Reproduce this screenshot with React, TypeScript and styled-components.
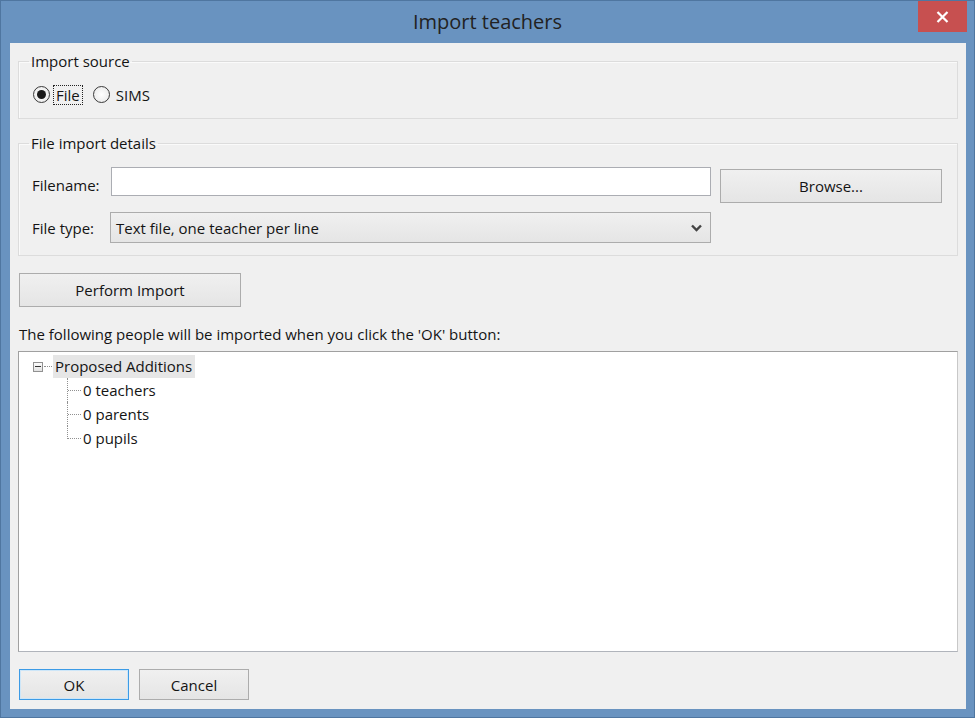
import * as React from 'react';
import styled, { createGlobalStyle } from 'styled-components';

const GlobalStyle = createGlobalStyle`
  html, body {
    margin: 0;
    padding: 0;
    background: #fff;
  }
  body {
    font-family: 'Open Sans', 'Noto Sans', 'DejaVu Sans', sans-serif;
    font-size: 15px;
    color: #141414;
  }
`;

const Window = styled.div`
  width: 975px;
  height: 718px;
  box-sizing: border-box;
  background: #6993c0;
  border: 1px solid #4f76a0;
  display: flex;
  flex-direction: column;
  padding: 0 8px 8px 8px;
`;

const TitleBar = styled.div`
  height: 42px;
  display: flex;
  align-items: center;
  justify-content: center;
  position: relative;
  flex: none;
`;

const Title = styled.div`
  font-size: 20px;
  color: #222;
  margin-top: -1px;
`;

const CloseButton = styled.div`
  position: absolute;
  right: -1px;
  top: 0;
  width: 49px;
  height: 31px;
  background: #c75050;
  display: flex;
  align-items: center;
  justify-content: center;
`;

const Client = styled.div`
  flex: 1;
  background: #f0f0f0;
  margin-left: 1px;
  padding: 9px 8px 0 8px;
  display: flex;
  flex-direction: column;
`;

const GroupBox = styled.fieldset<{ $gap?: number }>`
  margin: ${(p) => p.$gap ?? 0}px 0 0 0;
  padding: 0 0 0 11px;
  border: 1px solid #dcdcdc;
  box-shadow: inset 1px 1px 0 #fafafa;
  min-width: 0;
`;

const Legend = styled.legend`
  padding: 0 2px;
  margin-left: -1px;
  line-height: 19px;
`;

const RadioRow = styled.div`
  display: flex;
  align-items: center;
  height: 47px;
  padding-left: 3px;
`;

const RadioOption = styled.label`
  display: flex;
  align-items: center;
  margin-right: 11px;
`;

const RadioCircle = styled.span<{ $checked?: boolean }>`
  width: 17px;
  height: 17px;
  box-sizing: border-box;
  border-radius: 50%;
  border: 1px solid #3a3a3a;
  background: radial-gradient(circle, #fff 0%, #e6e6e6 100%);
  display: flex;
  align-items: center;
  justify-content: center;
  margin-right: 4px;

  &::after {
    content: '';
    display: ${(p) => (p.$checked ? 'block' : 'none')};
    width: 9px;
    height: 9px;
    border-radius: 50%;
    background: #1a1a1a;
  }
`;

const RadioText = styled.span<{ $focused?: boolean }>`
  padding: 0 2px;
  outline: ${(p) => (p.$focused ? '1px dotted #222' : 'none')};
  line-height: 18px;
`;

const FormGrid = styled.div`
  display: grid;
  grid-template-columns: 78px 601px 1fr;
  grid-template-rows: 36px 31px;
  row-gap: 9px;
  align-items: start;
  padding: 14px 16px 12px 2px;
`;

const FieldLabel = styled.span`
  align-self: center;
`;

const TextInput = styled.div`
  height: 29px;
  box-sizing: border-box;
  background: #fff;
  border: 1px solid #abadb3;
  margin-left: 1px;
`;

const BrowseButton = styled.div`
  margin-left: 9px;
  margin-top: 2px;
`;

const Select = styled.div`
  height: 31px;
  box-sizing: border-box;
  border: 1px solid #acacac;
  background: linear-gradient(#f0f0f0, #e5e5e5);
  display: flex;
  align-items: center;
  justify-content: space-between;
  padding: 0 8px 0 5px;
`;

const Button = styled.div<{ $width: number; $height?: number; $default?: boolean }>`
  width: ${(p) => p.$width}px;
  height: ${(p) => p.$height ?? 31}px;
  box-sizing: border-box;
  border: 1px solid ${(p) => (p.$default ? '#3c9be6' : '#acacac')};
  box-shadow: ${(p) => (p.$default ? 'inset 0 0 0 1px #cde6f8' : 'none')};
  background: linear-gradient(#f0f0f0, #e5e5e5);
  display: flex;
  align-items: center;
  justify-content: center;
  flex: none;
`;

const ActionRow = styled.div`
  margin-top: 17px;
  margin-left: 1px;
`;

const Caption = styled.div`
  margin-top: 18px;
  margin-left: 1px;
  line-height: 19px;
`;

const TreeBox = styled.div`
  margin-top: 7px;
  height: 301px;
  box-sizing: border-box;
  background: #fff;
  border: 1px solid #a0a0a0;
  border-right-color: #c8c8c8;
  border-bottom-color: #b0b4bb;
  padding: 3px 0 0 14px;
`;

const TreeRoot = styled.div`
  display: flex;
  align-items: center;
  height: 23px;
`;

const Expander = styled.span`
  width: 10px;
  height: 10px;
  box-sizing: border-box;
  border: 1px solid #919191;
  background: linear-gradient(#fcfcfc, #e2e2e2);
  display: flex;
  align-items: center;
  justify-content: center;

  &::after {
    content: '';
    width: 6px;
    height: 1px;
    background: #333;
  }
`;

const HLine = styled.span<{ $width: number }>`
  width: ${(p) => p.$width}px;
  border-top: 1px dotted #909090;
  align-self: center;
  margin: 0 1px;
  flex: none;
`;

const RootLabel = styled.span`
  background: #e6e6e6;
  height: 23px;
  line-height: 23px;
  padding: 0 3px 0 2px;
`;

const Children = styled.div`
  margin-left: 34px;
`;

const ChildRow = styled.div<{ $last?: boolean }>`
  display: flex;
  align-items: center;
  height: 24px;
  position: relative;

  &::before {
    content: '';
    position: absolute;
    left: 0;
    top: 0;
    height: ${(p) => (p.$last ? '13px' : '24px')};
    border-left: 1px dotted #909090;
  }
`;

const ChildLabel = styled.span`
  margin-left: 1px;
`;

const Footer = styled.div`
  display: flex;
  gap: 10px;
  margin-top: 17px;
  margin-left: 1px;
`;

const Chevron = () => (
  <svg width="11" height="8" viewBox="0 0 11 8">
    <path d="M1 1.5 L5.5 6 L10 1.5" fill="none" stroke="#444" strokeWidth="2.4" />
  </svg>
);

const CloseIcon = () => (
  <svg width="13" height="12" viewBox="0 0 13 12">
    <path d="M1.5 1 L11.5 11 M11.5 1 L1.5 11" stroke="#fff" strokeWidth="2.2" />
  </svg>
);

const children = ['0 teachers', '0 parents', '0 pupils'];

export default function App() {
  return (
    <>
      <GlobalStyle />
      <Window>
        <TitleBar>
          <Title>Import teachers</Title>
          <CloseButton>
            <CloseIcon />
          </CloseButton>
        </TitleBar>
        <Client>
          <GroupBox>
            <Legend>Import source</Legend>
            <RadioRow>
              <RadioOption>
                <RadioCircle $checked />
                <RadioText $focused>File</RadioText>
              </RadioOption>
              <RadioOption>
                <RadioCircle />
                <RadioText>SIMS</RadioText>
              </RadioOption>
            </RadioRow>
          </GroupBox>
          <GroupBox $gap={15}>
            <Legend>File import details</Legend>
            <FormGrid>
              <FieldLabel>Filename:</FieldLabel>
              <TextInput />
              <BrowseButton>
                <Button $width={222} $height={34}>Browse...</Button>
              </BrowseButton>
              <FieldLabel>File type:</FieldLabel>
              <Select>
                <span>Text file, one teacher per line</span>
                <Chevron />
              </Select>
              <span />
            </FormGrid>
          </GroupBox>
          <ActionRow>
            <Button $width={222} $height={34}>Perform Import</Button>
          </ActionRow>
          <Caption>The following people will be imported when you click the 'OK' button:</Caption>
          <TreeBox>
            <TreeRoot>
              <Expander />
              <HLine $width={8} />
              <RootLabel>Proposed Additions</RootLabel>
            </TreeRoot>
            <Children>
              {children.map((c, i) => (
                <ChildRow key={c} $last={i === children.length - 1}>
                  <HLine $width={13} />
                  <ChildLabel>{c}</ChildLabel>
                </ChildRow>
              ))}
            </Children>
          </TreeBox>
          <Footer>
            <Button $width={110} $default>OK</Button>
            <Button $width={110}>Cancel</Button>
          </Footer>
        </Client>
      </Window>
    </>
  );
}
